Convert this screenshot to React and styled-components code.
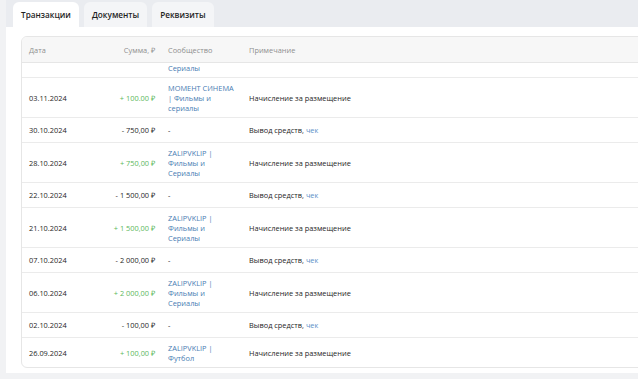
import styled, { createGlobalStyle } from 'styled-components';

const GlobalStyle = createGlobalStyle`
    html, body {
        margin: 0;
        padding: 0;
        background: #f1f2f4;
        font-family: "Open Sans", "Liberation Sans", sans-serif;
    }
    #root {
        width: 638px;
        height: 379px;
        overflow: hidden;
    }
`;

const zalip = ['ZALIPVKLIP |', 'Фильмы и', 'Сериалы'];

const rows = [
    { date: '03.11.2024', sum: '+ 100.00 ₽', plus: true, group: ['МОМЕНТ СИНЕМА', '| Фильмы и', 'сериалы'], note: 'Начисление за размещение' },
    { date: '30.10.2024', sum: '- 750,00 ₽', group: null, note: 'Вывод средств, ', check: true },
    { date: '28.10.2024', sum: '+ 750,00 ₽', plus: true, group: zalip, note: 'Начисление за размещение' },
    { date: '22.10.2024', sum: '- 1 500,00 ₽', group: null, note: 'Вывод средств, ', check: true },
    { date: '21.10.2024', sum: '+ 1 500,00 ₽', plus: true, group: zalip, note: 'Начисление за размещение' },
    { date: '07.10.2024', sum: '- 2 000,00 ₽', group: null, note: 'Вывод средств, ', check: true },
    { date: '06.10.2024', sum: '+ 2 000,00 ₽', plus: true, group: zalip, note: 'Начисление за размещение' },
    { date: '02.10.2024', sum: '- 100,00 ₽', group: null, note: 'Вывод средств, ', check: true },
    { date: '26.09.2024', sum: '+ 100,00 ₽', plus: true, group: ['ZALIPVKLIP |', 'Футбол'], note: 'Начисление за размещение' },
];

function App() {
    return (
        <>
            <GlobalStyle />
            <Page>
                <Tabs>
                    <Tab active>Транзакции</Tab>
                    <Tab>Документы</Tab>
                    <Tab>Реквизиты</Tab>
                </Tabs>
                <Panel>
                    <Card>
                        <HeadRow>
                            <Cell>Дата</Cell>
                            <Cell right>Сумма, ₽</Cell>
                            <GroupCell>Сообщество</GroupCell>
                            <Cell>Примечание</Cell>
                        </HeadRow>
                        <PartRow>
                            <Cell />
                            <Cell />
                            <GroupCell><GroupLink>Сериалы</GroupLink></GroupCell>
                            <Cell />
                        </PartRow>
                        {rows.map((r, i) =>
                            <Row key={i} last={i === rows.length - 1}>
                                <Cell>{r.date}</Cell>
                                <Cell right plus={r.plus}>{r.sum}</Cell>
                                <GroupCell>
                                    {r.group
                                        ? <GroupLink>{r.group.map((line, j) => <span key={j}>{line}</span>)}</GroupLink>
                                        : '-'}
                                </GroupCell>
                                <Cell>{r.note}{r.check && <CheckLink>чек</CheckLink>}</Cell>
                            </Row>
                        )}
                    </Card>
                </Panel>
            </Page>
        </>
    );
}
export default App;

const Page = styled.div`
    margin-left: 6px;
    width: 700px;
`;

const Tabs = styled.div`
    display: flex;
    gap: 5px;
    height: 27px;
    padding: 2px 0 0 7px;
    box-sizing: border-box;
    background: #eaecf0;
`;

const Tab = styled.div`
    display: flex;
    align-items: center;
    padding: 0 8px;
    border-radius: 6px 6px 0 0;
    background: ${p => p.active ? '#ffffff' : '#f4f5f7'};
    color: #1f1f1f;
    font-size: 8.2px;
    font-weight: 600;
`;

const Panel = styled.div`
    background: #ffffff;
    height: 346px;
    padding: 9px 0 0 15px;
    box-sizing: border-box;
`;

const Card = styled.div`
    border: 1px solid #e6e6e6;
    border-radius: 6px;
    overflow: hidden;
    font-size: 7.4px;
    color: #262626;
`;

const Row = styled.div`
    display: grid;
    grid-template-columns: 73px 67px 80px 1fr;
    align-items: center;
    min-height: 24px;
    border-bottom: ${p => p.last ? 'none' : '1px solid #ebebeb'};
`;

const HeadRow = styled(Row)`
    height: 25px;
    background: #f7f7f7;
    color: #8f8f8f;
    border-bottom: 1px solid #e6e6e6;
`;

const PartRow = styled(Row)`
    min-height: 0;
    height: 14px;
    align-items: start;
    & > div {
        padding-top: 0;
        padding-bottom: 0;
    }
`;

const Cell = styled.div`
    padding: 4.5px 7px;
    line-height: 10px;
    text-align: ${p => p.right ? 'right' : 'left'};
    color: ${p => p.plus ? '#5cb85c' : 'inherit'};
    white-space: ${p => p.right ? 'nowrap' : 'normal'};
`;

const GroupCell = styled(Cell)`
    padding-left: 6px;
    padding-right: 2px;
    white-space: nowrap;
`;

const GroupLink = styled.span`
    display: flex;
    flex-direction: column;
    color: #4a7db3;
`;

const CheckLink = styled.span`
    color: #5a8fc7;
`;
